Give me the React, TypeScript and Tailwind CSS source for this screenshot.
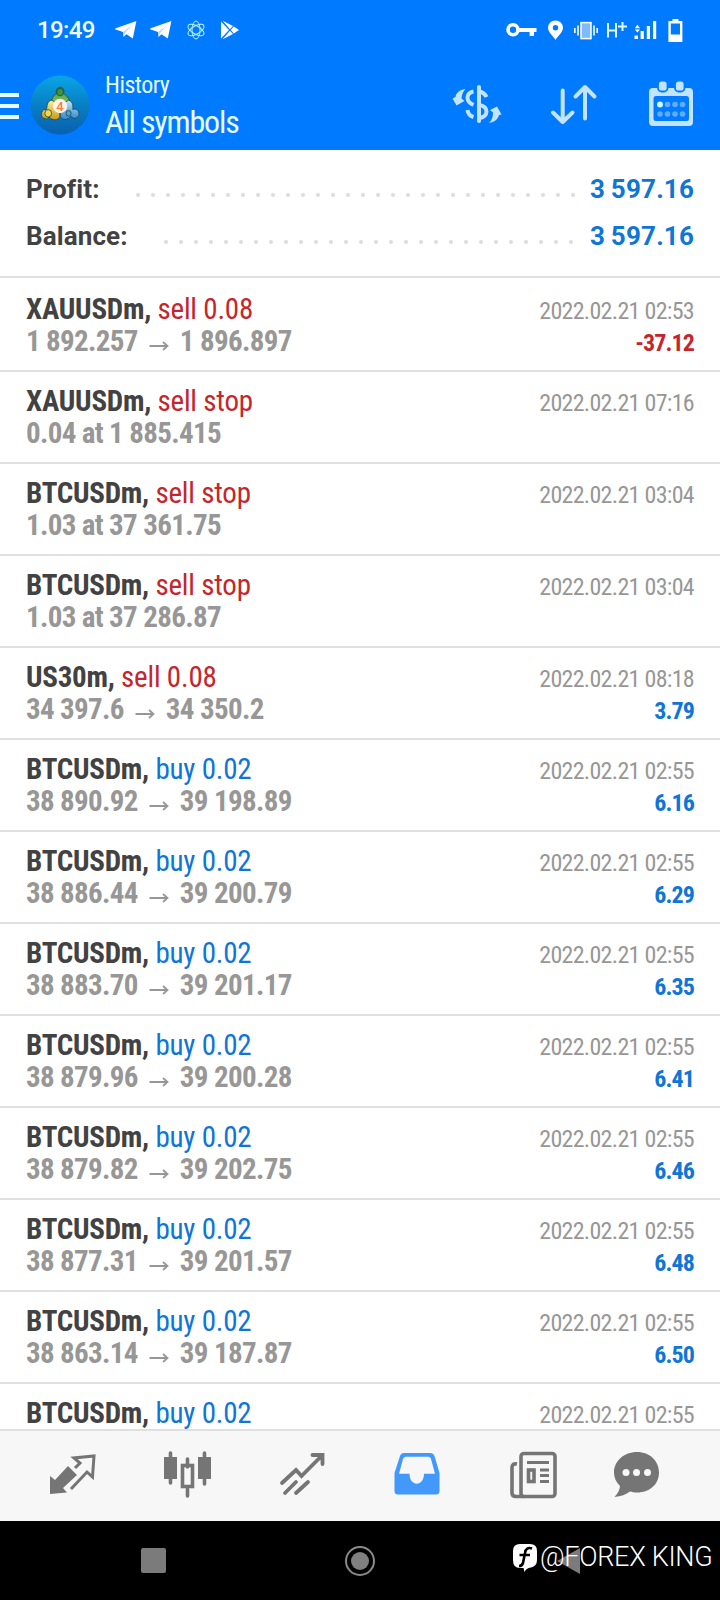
import React from 'react';

type Deal = {
  symbol: string;
  action: string;
  side: 'buy' | 'sell';
  from: string;
  to?: string;
  time: string;
  profit?: string;
};

const deals: Deal[] = [
  { symbol: 'XAUUSDm', action: 'sell 0.08', side: 'sell', from: '1 892.257', to: '1 896.897', time: '2022.02.21 02:53', profit: '-37.12' },
  { symbol: 'XAUUSDm', action: 'sell stop', side: 'sell', from: '0.04 at 1 885.415', time: '2022.02.21 07:16' },
  { symbol: 'BTCUSDm', action: 'sell stop', side: 'sell', from: '1.03 at 37 361.75', time: '2022.02.21 03:04' },
  { symbol: 'BTCUSDm', action: 'sell stop', side: 'sell', from: '1.03 at 37 286.87', time: '2022.02.21 03:04' },
  { symbol: 'US30m', action: 'sell 0.08', side: 'sell', from: '34 397.6', to: '34 350.2', time: '2022.02.21 08:18', profit: '3.79' },
  { symbol: 'BTCUSDm', action: 'buy 0.02', side: 'buy', from: '38 890.92', to: '39 198.89', time: '2022.02.21 02:55', profit: '6.16' },
  { symbol: 'BTCUSDm', action: 'buy 0.02', side: 'buy', from: '38 886.44', to: '39 200.79', time: '2022.02.21 02:55', profit: '6.29' },
  { symbol: 'BTCUSDm', action: 'buy 0.02', side: 'buy', from: '38 883.70', to: '39 201.17', time: '2022.02.21 02:55', profit: '6.35' },
  { symbol: 'BTCUSDm', action: 'buy 0.02', side: 'buy', from: '38 879.96', to: '39 200.28', time: '2022.02.21 02:55', profit: '6.41' },
  { symbol: 'BTCUSDm', action: 'buy 0.02', side: 'buy', from: '38 879.82', to: '39 202.75', time: '2022.02.21 02:55', profit: '6.46' },
  { symbol: 'BTCUSDm', action: 'buy 0.02', side: 'buy', from: '38 877.31', to: '39 201.57', time: '2022.02.21 02:55', profit: '6.48' },
  { symbol: 'BTCUSDm', action: 'buy 0.02', side: 'buy', from: '38 863.14', to: '39 187.87', time: '2022.02.21 02:55', profit: '6.50' },
  { symbol: 'BTCUSDm', action: 'buy 0.02', side: 'buy', from: '', time: '2022.02.21 02:55' },
];

const Telegram = () => (
  <svg width="22" height="20" viewBox="0 0 22 20" fill="#fff">
    <path d="M21.4 1 L17.8 18.6 L11.5 14.2 L8.4 17 L8 12 L0 9.2 Q0 8.4 1.4 7.9 Z" />
    <path d="M8.2 12 L17 5 L10 13 L8.6 16.6Z" fill="#007aff" opacity="0.3" />
  </svg>
);

const StatusBar = () => (
  <div className="flex h-[60px] items-center pl-[37px] pr-[37px]">
    <span className="w-[58px] whitespace-nowrap font-['Roboto',sans-serif] text-[24px] font-medium leading-[62px] tracking-[-0.6px] text-[#f0fdff]">19:49</span>
    <div className="ml-5 flex items-center gap-[13px]">
      <Telegram />
      <Telegram />
      <svg className="ml-[1px]" width="20" height="20" viewBox="0 0 20 20" fill="none" stroke="#b9f3ff" strokeWidth="1">
        <ellipse cx="10" cy="10" rx="4" ry="9" />
        <ellipse cx="10" cy="10" rx="4" ry="9" transform="rotate(60 10 10)" />
        <ellipse cx="10" cy="10" rx="4" ry="9" transform="rotate(-60 10 10)" />
      </svg>
      <svg className="ml-[1px]" width="20" height="20" viewBox="0 0 20 20" fill="#fff">
        <path d="M1 1.6 L9 10 L1 18.4Z M2.6 .8 L13 6 L10 9.2Z M2.6 19.2 L13 14 L10 10.8Z M13.8 6.6 L19 10 L13.8 13.4 L10.8 10Z" />
      </svg>
    </div>
    <div className="ml-auto flex items-center">
      <svg width="31" height="16" viewBox="0 0 31 16">
        <circle cx="7" cy="7.7" r="5" fill="none" stroke="#fff" strokeWidth="3.6" />
        <path d="M12 6 H30.5 V10 H28 V14 H23.6 V10 H12Z" fill="#fff" />
      </svg>
      <svg className="ml-[10px]" width="17" height="20" viewBox="0 0 17 20">
        <path fillRule="evenodd" fill="#fff" d="M8.5 0.4 A7.4 7.4 0 0 1 16 7.8 C16 12.4 10.4 16.4 8.5 20 C6.6 16.4 1 12.4 1 7.8 A7.4 7.4 0 0 1 8.5 .4Z M8.5 5 A2.7 2.7 0 1 0 8.5 10.4 A2.7 2.7 0 1 0 8.5 5Z" />
      </svg>
      <svg className="ml-[9px]" width="26" height="19" viewBox="0 0 26 19" stroke="#fff">
        <rect x="8" y="1.6" width="10" height="16" fill="#7fbcff" strokeWidth="1.5" />
        <path d="M5 4.5V14.5 M1.8 7V12 M21 4.5V14.5 M24.2 7V12" strokeWidth="1.6" fill="none" />
      </svg>
      <svg className="ml-[7px]" width="22" height="20" viewBox="0 0 22 20" fill="none" stroke="#dff6ff" strokeWidth="2">
        <path d="M2 3V17.5 M10 3V17.5 M2 10.5H10 M12 6.4H21 M16.5 2V11" />
      </svg>
      <svg className="ml-[6px]" width="23" height="20" viewBox="0 0 23 20" fill="#fff">
        <path d="M.5 15.5h3.4V19H.5z M6.6 11h3.2v8H6.6z M12.8 6h3.2v13h-3.2z M19 1h3.2v18H19z M3.4 4.8L6 8.2H.8z M3.4 12.5L6 9.4H.8z" />
      </svg>
      <svg className="ml-[11px]" width="15" height="23" viewBox="0 0 15 23">
        <path fill="#fff" fillRule="evenodd" d="M4.5 0h6v2H14.4V23H.4V2H4.5z M2.8 4.6V15.4H12V4.6z" />
      </svg>
    </div>
  </div>
);

const AppLogo = () => (
  <svg width="60" height="60" viewBox="0 0 60 60">
    <defs>
      <linearGradient id="logoBg" x1="0.5" y1="0" x2="0.5" y2="1">
        <stop offset="0" stopColor="#0aa5e6" />
        <stop offset="0.5" stopColor="#087fc4" />
        <stop offset="1" stopColor="#0b5fae" />
      </linearGradient>
      <linearGradient id="green" x1="0" y1="0" x2="0" y2="1">
        <stop offset="0" stopColor="#2f8a35" />
        <stop offset="1" stopColor="#a5d67a" />
      </linearGradient>
      <linearGradient id="gold" x1="0" y1="0" x2="0" y2="1">
        <stop offset="0" stopColor="#f8ee9a" />
        <stop offset="1" stopColor="#c99a18" />
      </linearGradient>
      <linearGradient id="sky" x1="0" y1="0" x2="0" y2="1">
        <stop offset="0" stopColor="#c5e6fa" />
        <stop offset="1" stopColor="#2c83cf" />
      </linearGradient>
    </defs>
    <circle cx="30" cy="30" r="29.5" fill="url(#logoBg)" />
    <g stroke="#204a3c" strokeWidth="0.9" transform="translate(4.600 2.600) scale(0.85 0.94)">
      <path d="M20 27 C20 20 24 18 26 17 A4.6 4.6 0 1 1 34 17 C37 19 41 21 41 27 L30 33Z" fill="url(#green)" />
      <path d="M20 24 C14 25 15 31 14 34 A5 5 0 1 0 17 42 C21 46 28 46 30 41 L28 28Z" fill="url(#gold)" />
      <path d="M40 24 C46 26 45 31 45 34 A5 5 0 1 1 43 41 C39 46 32 46 30 41 L33 28Z" fill="url(#sky)" />
      <circle cx="30" cy="15.4" r="4" fill="#3b9440" />
      <circle cx="16" cy="38" r="4" fill="#f1d84a" />
      <circle cx="40" cy="38" r="3" fill="#4b9ee0" />
    </g>
    <circle cx="30" cy="31" r="7.2" fill="#fdf3ea" />
    <text x="30" y="35.6" textAnchor="middle" fontFamily="Roboto, sans-serif" fontSize="13" fontWeight="500" fill="#f08040">4</text>
  </svg>
);

const Toolbar = () => (
  <div className="flex h-[90px] items-start text-[#e4fbff]">
    <div className="mt-[33px] flex w-[19px] flex-col gap-[7px]">
      <div className="h-[4px] bg-[#e4fbff]" />
      <div className="h-[4px] bg-[#e4fbff]" />
      <div className="h-[4px] bg-[#e4fbff]" />
    </div>
    <div className="ml-[11px] mt-[15px]">
      <AppLogo />
    </div>
    <div className="ml-[15px] whitespace-nowrap font-['Roboto_Condensed','Roboto',sans-serif] font-stretch-75%">
      <div className="mt-[9px] h-[32px] text-[24px] leading-[33px] tracking-[-0.5px]">History</div>
      <div className="h-[44px] text-[32px] leading-[43px] tracking-[-1.15px]">All symbols</div>
    </div>
    <div className="ml-auto mr-[26px] mt-[20px] flex items-start text-[#c3e4ff]">
      <svg width="50" height="48" viewBox="0 0 50 48" fill="none" stroke="currentColor" strokeWidth="4">
        <path d="M27 7V41" strokeLinecap="round" />
        <path d="M21.500 11.500C14 13 13 21 21.500 25 M15.500 30C16 34 18 36 21.500 37" />
        <path d="M27 11.500C30 12 33 13.500 34.500 17 M27 25C37 26 37 37 27 38" />
        <path d="M13.500 9C7 10 4 13 3.500 17L0.500 18.500L4.500 25.500L12.500 21L9.500 18.500C10 14 11 11.500 13.500 9Z" fill="currentColor" stroke="none" />
        <path d="M37 43C43 42 46 39 47 35L49.500 34.500L45 26.500L38 30L41 32.500C41 37 40 40 37 43Z" fill="currentColor" stroke="none" />
      </svg>
      <svg className="ml-[48px]" width="48" height="48" viewBox="0 0 48 48" fill="none" stroke="currentColor" strokeWidth="4" strokeLinecap="round" strokeLinejoin="round">
        <path d="M12.700 10.500V42 M3 32.500L12.700 42L22.500 32.500" />
        <path d="M35 38.500V7 M25.500 16.500L35 7L44.500 16.500" />
      </svg>
      <svg className="ml-[50px]" width="46" height="48" viewBox="-1 0 46 48">
        <path fill="currentColor" fillRule="evenodd" d="M4 8H40Q44 8 44 12V42Q44 46 40 46H4Q0 46 0 42V12Q0 8 4 8Z M7 16Q4.500 16 4.500 19V38.500Q4.500 41 7 41H37.500Q40 41 40 38.500V19Q40 16 37.500 16Z" />
        <rect x="9" y="0.500" width="9.500" height="11" rx="3.500" fill="currentColor" stroke="#007aff" strokeWidth="1.800" />
        <rect x="26" y="0.500" width="9.500" height="11" rx="3.500" fill="currentColor" stroke="#007aff" strokeWidth="1.800" />
        <circle cx="11" cy="24.500" r="3" fill="#c9fbff" />
        <g fill="#5fadff">
          <circle cx="18.500" cy="24.500" r="2.800" />
          <circle cx="26" cy="24.500" r="2.800" />
          <circle cx="33.500" cy="24.500" r="2.800" />
          <circle cx="11" cy="34" r="2.800" />
          <circle cx="18.500" cy="34" r="2.800" />
          <circle cx="26" cy="34" r="2.800" />
          <circle cx="33.500" cy="34" r="2.800" />
        </g>
      </svg>
    </div>
  </div>
);

const SummaryRow = ({ label, value, dots, dotsClass }: { label: string; value: string; dots: number; dotsClass: string }) => (
  <div className="flex h-[47px] items-center justify-between whitespace-nowrap font-['Roboto',sans-serif] text-[26px] font-bold leading-[47px]">
    <span className="tracking-[0.1px] text-[#424242]">{label}</span>
    <div className="flex items-center">
      <div className={'mt-[11px] flex justify-between ' + dotsClass}>
        {Array.from({ length: dots }, (_, i) => (
          <span key={i} className="size-[4px] rounded-full bg-[#dcdcdc]" />
        ))}
      </div>
      <span className="w-[104px] text-right tracking-[0.2px] text-[#0f75d6] [word-spacing:-1px]">{value}</span>
    </div>
  </div>
);

const DealRow = ({ deal }: { deal: Deal }) => (
  <div className="flex h-[92px] shrink-0 justify-between border-b-2 border-[#e0e0e0] px-[26px] pt-[11px]">
    <div className="whitespace-nowrap text-[29px]">
      <div className="h-[34px] leading-[36px]">
        <span className="font-bold tracking-[-0.25px] text-[#424242]">{deal.symbol}, </span>
        <span className={'tracking-[-0.2px] ' + (deal.side === 'sell' ? 'text-[#c4262b]' : 'text-[#0f75d6]')}>{deal.action}</span>
      </div>
      <div className="flex h-[32px] items-center font-bold leading-[32px] tracking-[-0.65px] text-[#979797]">
        <span>{deal.from}</span>
        {deal.to && (
          <>
            <svg className="mx-[11px] mt-[9px]" width="20" height="12" viewBox="0 0 20 12" fill="none" stroke="currentColor" strokeWidth="1.8">
              <path d="M0.500 6H18 M14 2L18.500 6L14 10" />
            </svg>
            <span>{deal.to}</span>
          </>
        )}
      </div>
    </div>
    <div className="text-right text-[24px]">
      <div className="h-[33px] leading-[40px] tracking-[-0.7px] text-[#979797]">{deal.time}</div>
      <div className={'h-[32px] font-bold leading-[38px] tracking-[-0.9px] ' + (deal.profit?.startsWith('-') ? 'text-[#c4262b]' : 'text-[#0f75d6]')}>{deal.profit}</div>
    </div>
  </div>
);

const TabBar = () => (
  <div className="flex h-[92px] shrink-0 items-start border-t-2 border-[#e0e0e0] bg-[#f7f7f7] pl-[49px] pt-[22px] text-[#757575]">
    <svg className="mt-[1px]" width="47" height="48" viewBox="0 0 47 48">
      <path fill="currentColor" d="M1 22L6 26L19 12L28 21L14 34L18 38.500L1 40Z" />
      <path fill="none" stroke="currentColor" strokeWidth="3" d="M26 14L31 9L25 4L45 2L43.500 23L38 18L22 35" />
    </svg>
    <svg className="ml-[67px] overflow-visible" width="50" height="48" viewBox="0 0 50 48" fill="currentColor" stroke="currentColor" strokeWidth="3.600" strokeLinecap="round">
      <path d="M7.500 0V30 M41.500 0V31 M24.500 6V14 M24.500 36V43" />
      <rect x="2.500" y="5.500" width="10" height="19" strokeWidth="3" />
      <rect x="36.500" y="5.500" width="10" height="19" strokeWidth="3" />
      <rect x="19.500" y="12.500" width="10" height="21" fill="none" strokeWidth="3.600" />
    </svg>
    <svg className="ml-[66px] overflow-visible" width="46" height="48" viewBox="0 0 46 48" fill="none" stroke="currentColor" strokeWidth="3.800" strokeLinecap="round">
      <path d="M3 30L17 17L22.500 23L42.500 3 M33.500 2H43.500V11" />
      <path d="M6 40L17 29 M17 40L29 29" />
    </svg>
    <svg className="ml-[69px]" width="47" height="48" viewBox="0 0 47 48">
      <path fill="#4299fb" fillRule="evenodd" d="M10 0H36Q39.500 0 40.500 3L45.500 20V38Q45.500 41.500 42 41.500H4Q.500 41.500 .500 38V20L6 3Q7 0 10 0Z M11.500 3.800Q9.800 4 9 6L5 20.800H15.500C15.500 34 30 34 30 20.800H41L37 6Q36.500 4 34.500 3.800Z" />
    </svg>
    <svg className="ml-[69px] overflow-visible" width="50" height="48" viewBox="0 0 50 48" fill="none" stroke="currentColor" strokeWidth="3.600">
      <rect x="11" y="0.500" width="34" height="43" rx="3" />
      <path d="M7 11Q2 10 2 15V40Q2 43.500 6 43.500H14" />
      <path d="M17 9.500H39 M30 17H39 M30 22.500H39 M30 28.500H39" strokeWidth="3.200" />
      <rect x="18.500" y="17" width="5.500" height="11.500" />
    </svg>
    <svg className="-mt-[1px] ml-[54px]" width="46" height="48" viewBox="0 0 46 48">
      <path fill="currentColor" d="M23 0C36 0 45 9 45 20.500C45 32 36 40.500 23 40.500C20 40.500 18 40 16 39.500C12 42.500 7 44.500 .500 45C4 41.500 5.500 38 6 34C2 30 0 26 0 20.500C0 9 10 0 23 0Z" />
      <g fill="#f7f7f7">
        <circle cx="12" cy="20.500" r="3.500" />
        <circle cx="22.500" cy="20.500" r="3.500" />
        <circle cx="33.500" cy="20.500" r="3.500" />
      </g>
    </svg>
  </div>
);

const NavBar = () => (
  <div className="relative flex h-[79px] shrink-0 items-center bg-black">
    <div className="ml-[141px] size-[25px] rounded-[2px] bg-[#7b7b7b]" />
    <svg className="ml-[179px]" width="30" height="30" viewBox="0 0 30 30">
      <circle cx="15" cy="15" r="14" fill="none" stroke="#8a8a8a" strokeWidth="2" />
      <circle cx="15" cy="15" r="9" fill="#808080" />
    </svg>
    <svg className="ml-[182px]" width="24" height="26" viewBox="0 0 24 26" fill="#7b7b7b">
      <path d="M23 0V26L0 13Z" />
    </svg>
    {/* account watermark, drawn over the back button */}
    <div className="absolute left-[512px] top-[20px] flex items-start whitespace-nowrap text-white">
      <svg className="mt-[1px]" width="27" height="30" viewBox="0 0 27 30">
        <path fill="#fff" d="M8 2H18Q25 2 25 9V18Q25 24 19 25.500Q14 26 12.500 30L11.500 26H8Q1 26 1 18V9Q1 2 8 2Z" />
        <path fill="none" stroke="#000" strokeWidth="2.600" d="M20 6.500Q14 4.500 13 11L11 21Q10 24 7 24 M7.500 13H18" />
      </svg>
      <span className="ml-[1px] font-['Roboto',sans-serif] text-[27px] font-light leading-[32px] tracking-[-0.3px]">@FOREX KING</span>
    </div>
  </div>
);

const App = () => {
  return (
    <div className="flex h-[1600px] w-[720px] flex-col overflow-hidden bg-white">
      <div className="shrink-0 bg-[#007aff]">
        <StatusBar />
        <Toolbar />
      </div>
      <div className="h-[128px] shrink-0 border-b-2 border-[#e0e0e0] px-[26px] pt-[16px]">
        <SummaryRow label="Profit:" value="3 597.16" dots={30} dotsClass="mr-[15px] w-[439px]" />
        <SummaryRow label="Balance:" value="3 597.16" dots={28} dotsClass="mr-[17px] w-[409px]" />
      </div>
      <div className="flex min-h-0 flex-1 flex-col overflow-hidden pt-[2px] font-['Roboto_Condensed','Roboto',sans-serif] font-stretch-75%">
        {deals.map((deal, i) => (
          <DealRow key={i} deal={deal} />
        ))}
      </div>
      <TabBar />
      <NavBar />
    </div>
  );
};

export default App;
